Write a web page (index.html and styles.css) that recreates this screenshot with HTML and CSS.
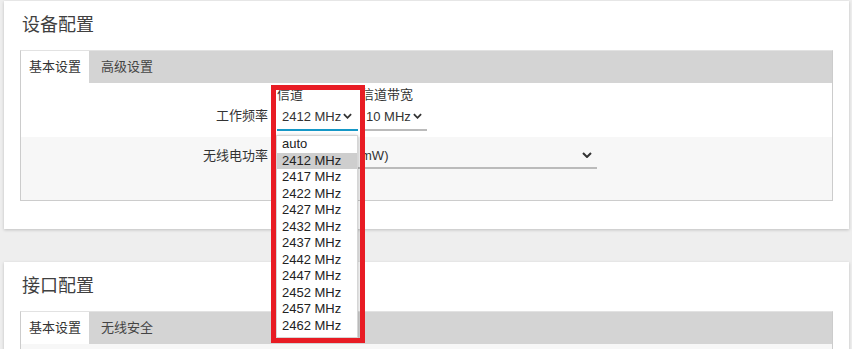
FILE: index.html
```html
<!DOCTYPE html>
<html lang="zh">
<head>
    <meta charset="UTF-8">
    <meta name="viewport" content="width=device-width, initial-scale=1.0">
    <title>设备配置</title>
    <link rel="stylesheet" href="styles.css">
</head>
<body>
    <div class="card">
        <h2 class="card-title">设备配置</h2>
        <div class="panel">
            <div class="tabs">
                <span class="tab active">基本设置</span>
                <span class="tab">高级设置</span>
            </div>
            <div class="row row-freq">
                <label class="row-label">工作频率</label>
                <div class="fields">
                    <div class="field field-channel">
                        <span class="field-label">信道</span>
                        <div class="select focused">
                            <span>2412 MHz</span>
                            <svg class="chevron" viewBox="0 0 10 6" width="9" height="6"><polyline points="1,1 5,5 9,1"/></svg>
                        </div>
                        <ul class="dropdown">
                            <li>auto</li>
                            <li class="hover">2412 MHz</li>
                            <li>2417 MHz</li>
                            <li>2422 MHz</li>
                            <li>2427 MHz</li>
                            <li>2432 MHz</li>
                            <li>2437 MHz</li>
                            <li>2442 MHz</li>
                            <li>2447 MHz</li>
                            <li>2452 MHz</li>
                            <li>2457 MHz</li>
                            <li>2462 MHz</li>
                        </ul>
                        <div class="mark"></div>
                    </div>
                    <div class="field field-width">
                        <span class="field-label">信道带宽</span>
                        <div class="select">
                            <span>10 MHz</span>
                            <svg class="chevron" viewBox="0 0 10 6" width="9" height="6"><polyline points="1,1 5,5 9,1"/></svg>
                        </div>
                    </div>
                </div>
            </div>
            <div class="row row-power">
                <label class="row-label">无线电功率</label>
                <div class="select select-power">
                    <span>20 dBm (100 mW)</span>
                    <svg class="chevron" viewBox="0 0 10 6" width="10" height="6"><polyline points="1,1 5,5 9,1"/></svg>
                </div>
            </div>
        </div>
    </div>

    <div class="card">
        <h2 class="card-title">接口配置</h2>
        <div class="panel">
            <div class="tabs">
                <span class="tab active">基本设置</span>
                <span class="tab">无线安全</span>
            </div>
            <div class="row row-power"></div>
        </div>
    </div>
</body>
</html>
```

FILE: styles.css
```css
body {
    margin: 0;
    padding: 1px 3px 0 4px;
    background-color: #eeeeee;
    font-family: "Liberation Sans", "Noto Sans CJK SC", sans-serif;
    font-size: 13px;
    color: #333;
}
.card {
    background: #fff;
    padding: 12px 16px 28px 16px;
    box-shadow: 0 1px 3px rgba(0, 0, 0, 0.2);
    margin-bottom: 33px;
}
.card-title {
    margin: 0 0 13px 2px;
    font-size: 18px;
    line-height: 24px;
    font-weight: normal;
    color: #404040;
}
.panel {
    border: 1px solid #ccc;
    border-top-color: #e2e2e2;
}
.tabs {
    display: flex;
    gap: 4px;
    height: 32px;
    background-color: #d4d4d4;
}
.tab {
    padding: 0 8px;
    line-height: 32px;
    color: #444;
}
.tab.active {
    background: #fff;
    color: #333;
}
.row {
    display: grid;
    grid-template-columns: 247px 1fr;
    column-gap: 9px;
}
.row-label {
    text-align: right;
    line-height: 26px;
    color: #333;
}
.row-freq {
    height: 54px;
    padding-top: 3px;
    box-sizing: border-box;
}
.row-freq .row-label {
    align-self: end;
    margin-bottom: 8px;
}
.row-power {
    height: 63px;
    padding-top: 6px;
    box-sizing: border-box;
    background-color: #f7f7f7;
    align-items: start;
}
.fields {
    display: flex;
    gap: 3px;
    align-items: flex-start;
}
.field {
    display: flex;
    flex-direction: column;
}
.field-channel {
    position: relative;
    width: 81px;
}
.field-width {
    width: 66px;
}
.field-label {
    line-height: 17px;
    color: #333;
}
.select {
    display: flex;
    align-items: center;
    justify-content: space-between;
    height: 26px;
    padding: 0 5px;
    border-bottom: 2px solid #bbb;
    color: #333;
}
.select.focused {
    border-bottom-color: #1597c6;
    padding-right: 6px;
}
.select-power {
    width: 320px;
    box-sizing: border-box;
    padding-left: 6px;
}
.chevron {
    fill: none;
    stroke: #333;
    stroke-width: 2;
}
.dropdown {
    position: absolute;
    top: 49px;
    left: -1px;
    width: 82px;
    box-sizing: border-box;
    margin: 0;
    padding: 0 0 3px 0;
    list-style: none;
    background: #fff;
    border: 1px solid #d6d6d6;
    box-shadow: 0 1px 4px rgba(0, 0, 0, 0.3);
    z-index: 5;
}
.dropdown li {
    line-height: 16.5px;
    padding-left: 5px;
    color: #222;
}
.dropdown li.hover {
    background-color: #cecece;
}
.mark {
    position: absolute;
    top: -1px;
    left: -6px;
    width: 94px;
    height: 258px;
    box-sizing: border-box;
    border: 5px solid #e81c24;
    z-index: 10;
}
```
